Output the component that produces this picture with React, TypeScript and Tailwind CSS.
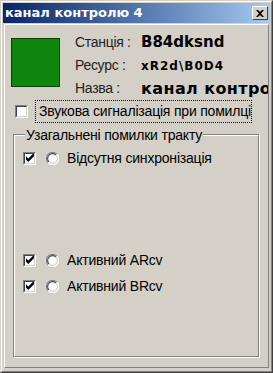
import React from "react";

const face = { fontFamily: '"Liberation Sans", Arial, sans-serif' };

function CheckBox({ checked }: { checked?: boolean }) {
  return (
    <div className="w-[13px] h-[13px] shrink-0 border border-t-[#808080] border-l-[#808080] border-r-white border-b-white">
      <div className="w-full h-full border border-t-[#404040] border-l-[#404040] border-r-[#d4d0c8] border-b-[#d4d0c8] bg-white flex items-center justify-center">
        {checked && (
          <svg width="8" height="8" viewBox="0 0 7 7">
            <path d="M0 2 L2 4 L7 -1 L7 2 L2 7 L0 5 Z" fill="#000" />
          </svg>
        )}
      </div>
    </div>
  );
}

function Radio() {
  return (
    <svg width="13" height="13" viewBox="0 0 12 12" className="shrink-0">
      <circle cx="6" cy="6" r="5.5" fill="#fff" />
      <path d="M10 2 A5.5 5.5 0 0 0 2 10" stroke="#808080" strokeWidth="1" fill="none" />
      <path d="M9.2 2.8 A4.5 4.5 0 0 0 2.8 9.2" stroke="#404040" strokeWidth="1" fill="none" />
      <path d="M2 10 A5.5 5.5 0 0 0 10 2" stroke="#ffffff" strokeWidth="1" fill="none" />
      <path d="M2.8 9.2 A4.5 4.5 0 0 0 9.2 2.8" stroke="#d4d0c8" strokeWidth="1" fill="none" />
    </svg>
  );
}

function ErrorRow({ label }: { label: string }) {
  return (
    <div className="h-[26px] flex items-center pl-[8px]">
      <CheckBox checked />
      <div className="ml-[10px]">
        <Radio />
      </div>
      <span className="ml-[8px] text-[14px] tracking-[-0.2px] text-black whitespace-nowrap">{label}</span>
    </div>
  );
}

export default function App() {
  const info = [
    { label: "Станція :", value: "B84dksnd", cls: "text-[15px]" },
    { label: "Ресурс :", value: "xR2d\\B0D4", cls: "text-[12px] tracking-[1px]" },
    { label: "Назва :", value: "канал контролю 4", cls: "text-[16px] tracking-[0.4px]" },
  ];

  return (
    <div className="w-[273px] h-[373px] bg-[#d4d0c8] border border-t-[#d4d0c8] border-l-[#d4d0c8] border-r-[#404040] border-b-[#404040]" style={face}>
      <div className="w-full h-full border border-t-white border-l-white border-r-[#808080] border-b-[#808080] p-[1px] flex flex-col">
        {/* Title bar */}
        <div className="h-[20px] shrink-0 bg-gradient-to-r from-[#0a246a] to-[#a6caf0] flex items-center pl-[2px] pr-[2px]">
          <span className="text-white text-[13px] font-bold whitespace-nowrap" style={{ fontFamily: '"DejaVu Sans", sans-serif' }}>
            канал контролю 4
          </span>
          <div className="ml-auto w-[16px] h-[14px] bg-[#d4d0c8] border border-t-white border-l-white border-r-[#404040] border-b-[#404040] flex items-center justify-center">
            <svg width="8" height="7" viewBox="0 0 8 7">
              <path d="M0 0 H2 L4 2 L6 0 H8 L5 3.5 L8 7 H6 L4 5 L2 7 H0 L3 3.5 Z" fill="#000" />
            </svg>
          </div>
        </div>

        {/* Client area */}
        <div className="flex-1 mt-[1px] mx-[1px] mb-[2px] border border-t-white border-l-white border-r-[#808080] border-b-[#808080] flex flex-col overflow-hidden">
          <div className="flex pt-[6px]">
            <div className="ml-[6px] mt-[7px] w-[49px] h-[49px] shrink-0 bg-[#0f870f] border border-[#0b3d0b]" />
            <div className="ml-[15px] w-[66px] shrink-0">
              {info.map((r) => (
                <div key={r.label} className="h-[23px] flex items-center text-[14px] tracking-[-0.3px] text-[#222]">
                  {r.label}
                </div>
              ))}
            </div>
            <div className="flex-1 min-w-0 overflow-hidden">
              {info.map((r) => (
                <div
                  key={r.label}
                  className={`h-[23px] flex items-center font-bold whitespace-nowrap text-black ${r.cls}`}
                  style={{ fontFamily: '"DejaVu Sans", sans-serif' }}
                >
                  {r.value}
                </div>
              ))}
            </div>
          </div>

          {/* Sound alarm checkbox */}
          <div className="h-[23px] flex items-center pl-[10px]">
            <CheckBox />
            <div className="ml-[7px] w-[217px] h-[23px] border border-dotted border-black overflow-hidden flex items-center pl-[3px]">
              <span className="text-[14px] tracking-[-0.2px] text-black whitespace-nowrap">
                Звукова сигналізація при помилці
              </span>
            </div>
          </div>

          {/* Group box */}
          <div className="mt-[11px] ml-[8px] w-[247px] h-[224px] border border-t-[#808080] border-l-[#808080] border-r-white border-b-white">
            <div className="w-full h-full border border-t-white border-l-white border-r-[#808080] border-b-[#808080] flex flex-col">
              <div className="-mt-[9px] ml-[10px] self-start bg-[#d4d0c8] px-[1px] text-[14px] tracking-[-0.2px] leading-[16px] text-black whitespace-nowrap">
                Узагальнені помилки тракту
              </div>
              <div className="mt-[2px]">
                <ErrorRow label="Відсутня синхронізація" />
              </div>
              <div className="mt-[76px]">
                <ErrorRow label="Активний ARcv" />
                <ErrorRow label="Активний BRcv" />
              </div>
            </div>
          </div>
        </div>
      </div>
    </div>
  );
}
